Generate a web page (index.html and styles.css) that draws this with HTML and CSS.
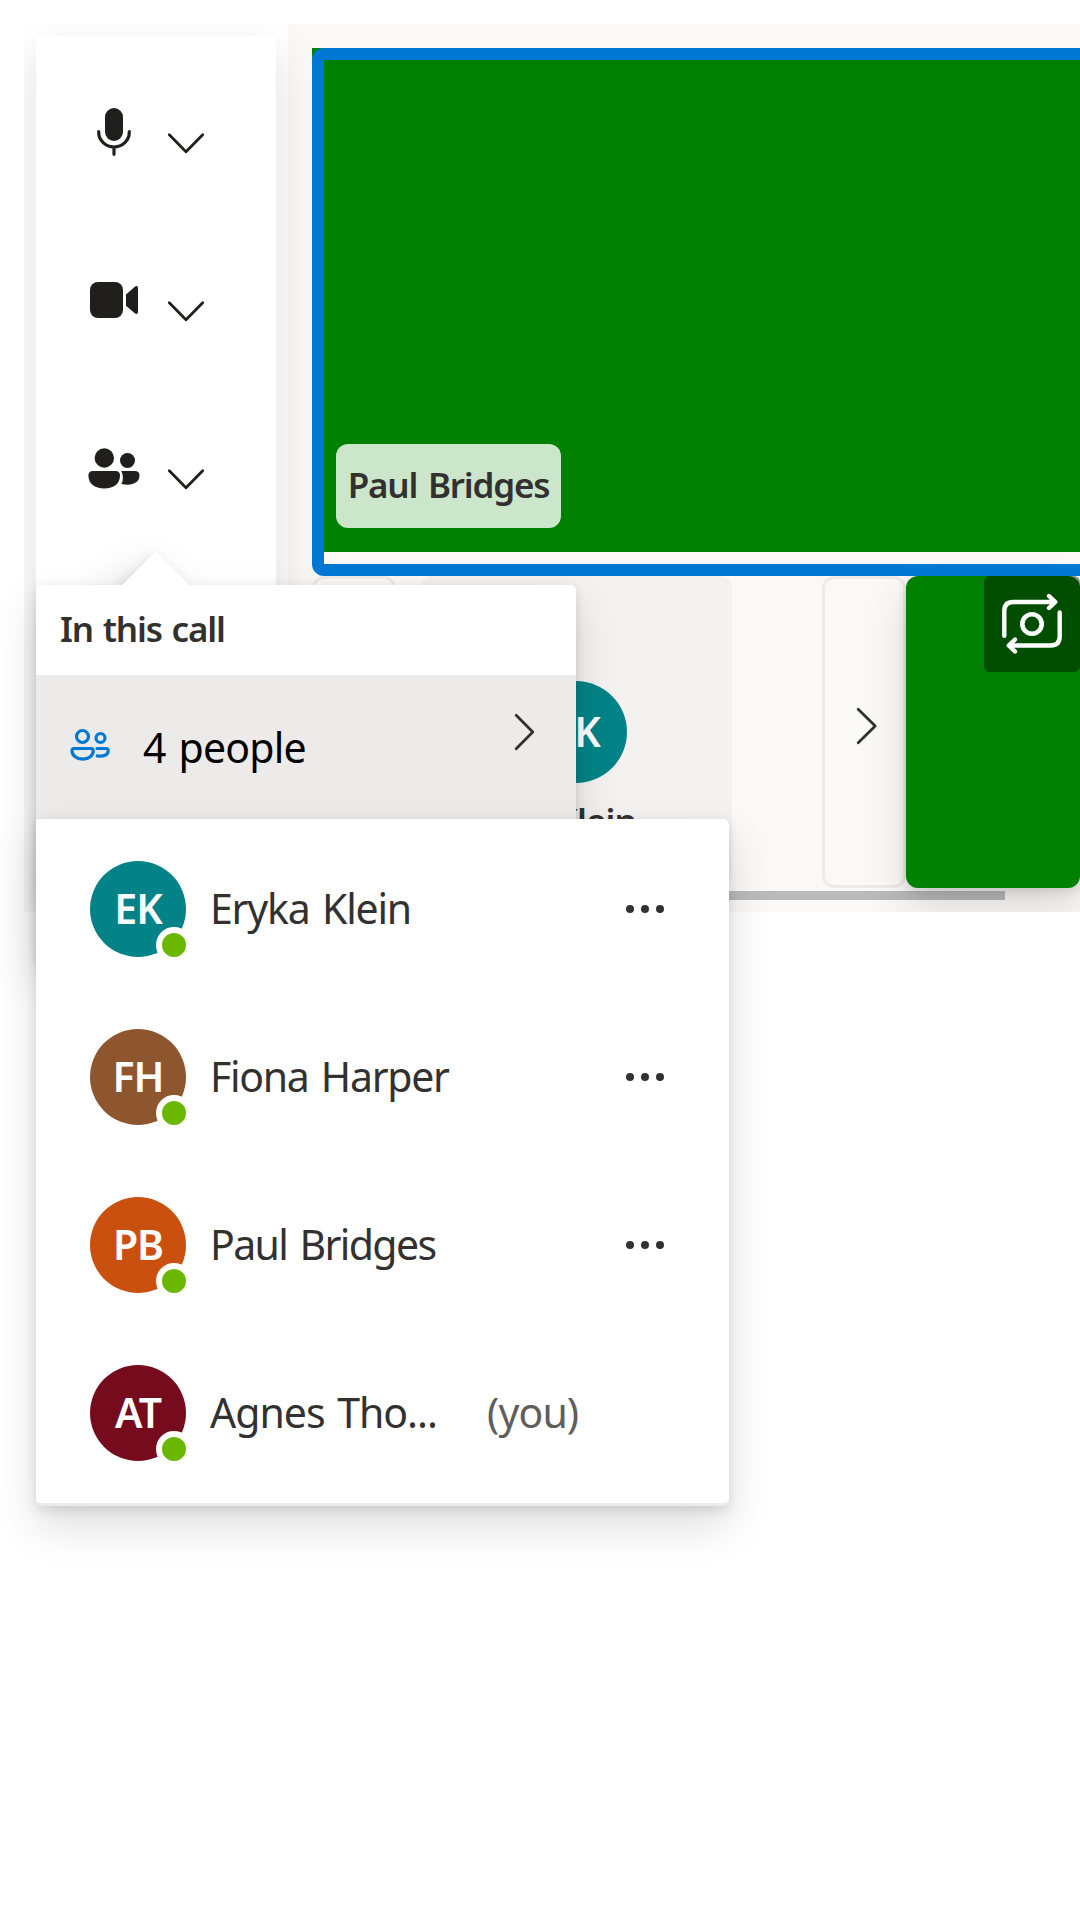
FILE: index.html
```html
<!DOCTYPE html>
<html lang="en">
<head>
<meta charset="utf-8">
<title>Call</title>
<link rel="stylesheet" href="styles.css">
</head>
<body>
<main class="app">
  <nav class="controls">
    <button class="control" aria-label="Microphone">
      <svg viewBox="36 36 240 168"><rect x="105" y="108" width="18" height="33" rx="9"/><path class="line" d="M98.7 131.5v.8a15.3 14.7 0 0 0 30.6 0v-.8M114 147v7.300" stroke-width="3.2"/><path class="line chev" d="m169.300 134.800 16.700 16.900 16.700-16.900"/></svg>
    </button>
    <button class="control" aria-label="Camera">
      <svg viewBox="36 204 240 168"><rect x="90" y="282" width="33" height="36" rx="8"/><path d="M126 294.400 134.500 287q3.500-2.300 3.500 1.200v23.600q0 3.500-3.500 1.200L126 305.800z"/><path class="line chev" d="m169.300 302.800 16.700 16.900 16.700-16.900"/></svg>
    </button>
    <button class="control" aria-label="People">
      <svg viewBox="36 372 240 168"><circle cx="104.300" cy="458" r="9.700"/><circle cx="127.500" cy="460.500" r="7.500"/><path d="M93 471h22.500q4.500 0 4.500 4.500c0 8-6 13-15.700 13S88.400 483.500 88.400 475.500Q88.400 471 93 471zM121.300 471H135q4.500 0 4.500 4.500c0 6-5 9.200-12 9.200q-3.500 0-6-.8 3-6.500-.2-12.900z"/><path class="line chev" d="m169.300 470.800 16.700 16.900 16.700-16.900"/></svg>
    </button>
  </nav>

  <section class="stage">
    <div class="speaker">
      <div class="video"><span class="name-tag">Paul Bridges</span></div>
    </div>
    <div class="strip">
      <button class="pager prev" aria-label="Previous"></button>
      <div class="person-tile">
        <div class="tile-avatar">EK</div>
        <div class="tile-name">Eryka Klein</div>
      </div>
      <button class="pager next" aria-label="Next"><svg viewBox="0 0 84 312"><path class="line chev" d="m36.200 133.300 17 16.700-17 16.700"/></svg></button>
      <div class="local-tile">
        <button class="switch-camera" aria-label="Switch camera"><svg viewBox="984 576 96 96"><path class="line" stroke-width="4.400" d="M1004.300 635.800V611q0-9 9-9h41.200m-5.500-6 6.300 6-6.300 6M1059.700 612.500v24q0 9-9 9H1009.500m5.500-6-6.300 6 6.300 6"/><circle class="line" cx="1032" cy="624" r="9.700" stroke-width="4.600"/></svg></button>
      </div>
    </div>
    <div class="scrollbar"></div>
  </section>
</main>

<div class="menu callout">
  <div class="beak"></div>
  <h2 class="menu-title">In this call</h2>
  <div class="menu-item">
    <svg class="people-icon" viewBox="66 726 48 39"><circle cx="82.500" cy="736.500" r="6"/><circle cx="100.500" cy="738" r="4.500"/><path d="M74.200 748.500h17.100q1.900 0 1.900 2.200c0 5-4.200 8.500-10.400 8.500s-10.800-3.500-10.800-8.500q0-2.200 2.200-2.200zM97 748.500h9.200q2 0 2 2.200c0 4.200-4.400 6.200-11 5.200"/></svg>
    <span class="people-count">4 people</span>
    <svg class="arrow" viewBox="512 711 24 42"><path class="line chev" d="m516.200 715.300 16.600 16.700-16.600 16.700"/></svg>
  </div>
</div>

<ul class="menu roster">
  <li class="participant"><span class="avatar teal">EK<i class="presence"></i></span><span class="name n1">Eryka Klein</span><svg class="more" viewBox="0 0 40 10"><circle cx="5" cy="5" r="4"/><circle cx="20" cy="5" r="4"/><circle cx="35" cy="5" r="4"/></svg></li>
  <li class="participant"><span class="avatar brown">FH<i class="presence"></i></span><span class="name n2">Fiona Harper</span><svg class="more" viewBox="0 0 40 10"><circle cx="5" cy="5" r="4"/><circle cx="20" cy="5" r="4"/><circle cx="35" cy="5" r="4"/></svg></li>
  <li class="participant"><span class="avatar orange">PB<i class="presence"></i></span><span class="name n3">Paul Bridges</span><svg class="more" viewBox="0 0 40 10"><circle cx="5" cy="5" r="4"/><circle cx="20" cy="5" r="4"/><circle cx="35" cy="5" r="4"/></svg></li>
  <li class="participant"><span class="avatar wine">AT<i class="presence"></i></span><span class="name n4">Agnes Tho...</span><span class="you">(you)</span></li>
</ul>
</body>
</html>
```
FILE: styles.css
```css
* { box-sizing: border-box; }
html, body { margin: 0; width: 1080px; height: 1920px; overflow: hidden; background: #fff; }
body {
  position: relative;
  padding: 24px 0 0 24px;
  font-family: "Noto Sans", "Open Sans", sans-serif;
  color: #323130;
  --shadow: 0 19.2px 43.2px rgba(0,0,0,.132), 0 3.6px 10.8px rgba(0,0,0,.108);
}
button { padding: 0; border: 0; background: none; color: inherit; font: inherit; }
svg { display: block; fill: currentColor; }
.line { fill: none; stroke: currentColor; stroke-linecap: round; stroke-linejoin: round; }
.chev { stroke-width: 2.8; }

.app { display: flex; height: 888px; overflow: hidden; background: #fff; }
.controls {
  position: relative; z-index: 1;
  flex: none; width: 240px; height: 864px; margin: 12px;
  background: #fff; color: #201f1e; box-shadow: 0 19.2px 43.2px rgba(0,0,0,.132);
}
.control { display: block; width: 240px; height: 168px; }
.stage { flex: 1; padding: 24px 0 0 24px; background: #faf9f8; }

.speaker { position: relative; height: 528px; margin-right: -40px; }
.speaker::after {
  content: ""; position: absolute; inset: 0;
  border: 12px solid #0078d4; border-radius: 12px;
}
.video { display: flex; align-items: flex-end; height: 504px; padding: 24px; background: #008000; }
.name-tag {
  width: 225px; height: 84px; line-height: 82px; border-radius: 12px;
  background: rgba(255,255,255,.8); text-align: center; white-space: nowrap;
  font-size: 35px; font-weight: 600; letter-spacing: -1.2px; word-spacing: 3px;
}
.strip { display: flex; height: 312px; }
.pager { flex: none; width: 84px; height: 312px; border: 3px solid #edebe9; border-radius: 12px; }
.pager svg { width: 84px; height: 312px; margin: -3px; }
.person-tile {
  display: flex; flex-direction: column; align-items: center;
  width: 312px; margin: 0 90px 0 24px; padding-top: 105px;
  border-radius: 12px; background: #f3f2f1;
}
.tile-avatar {
  width: 102px; height: 102px; line-height: 100px; border-radius: 50%;
  background: #038387; color: #fff; text-align: center; font-size: 41px; font-weight: 600; letter-spacing: -1px;
}
.tile-name { margin: 14px 56px 0 0; align-self: flex-end; padding-right: 40px; line-height: 48px; font-size: 35px; font-weight: 600; letter-spacing: -.9px; }
.local-tile {
  display: flex; justify-content: flex-end; width: 174px;
  border-radius: 12px; background: #008000; box-shadow: var(--shadow);
}
.switch-camera { width: 96px; height: 96px; border-radius: 6px; background: rgba(0,0,0,.4); color: #fff; }
.scrollbar { width: 693px; height: 9px; margin-top: 3px; background: rgba(0,0,0,.25); }

.menu { position: absolute; left: 36px; margin: 0; border-radius: 6px; background: #fff; box-shadow: var(--shadow); }
.callout { z-index: 2; top: 585px; width: 540px; height: 378px; }
.beak {
  position: absolute; z-index: -1; left: 96px; top: -24px; width: 48px; height: 48px;
  background: #fff; transform: rotate(45deg); box-shadow: var(--shadow);
}
.callout::before { content: ""; position: absolute; z-index: -1; inset: 0; border-radius: 6px; background: #fff; }
.menu-title {
  position: relative; margin: 0; padding-left: 24px; height: 90px; line-height: 88px; background: #fff; border-radius: 6px;
  font-size: 35px; font-weight: 600; letter-spacing: -1.2px; word-spacing: 2px;
}
.menu-item { display: flex; align-items: center; height: 144px; padding: 0 40px 0 30px; background: #edebe9; color: #000; }
.people-icon { width: 48px; height: 39px; margin-top: -3px; fill: none; stroke: #0078d4; stroke-width: 3.2; stroke-linecap: round; }
.people-count { flex: 1; margin: -1px 0 0 29px; font-size: 41px; letter-spacing: -.8px; word-spacing: 3px; }
.arrow { width: 24px; height: 42px; margin-top: -30px; color: #323130; }

.roster { z-index: 3; top: 819px; width: 693px; height: 687px; padding: 6px 0 0; list-style: none; border-bottom: 3px solid #edebe9; }
.participant { display: flex; align-items: center; height: 168px; padding: 0 64px 0 54px; }
.avatar {
  position: relative; width: 96px; height: 96px; line-height: 95px; border-radius: 50%;
  color: #fff; text-align: center; font-size: 41px; font-weight: 600; letter-spacing: -1px;
}
.teal { background: #038387; }
.brown { background: #8e562e; }
.orange { background: #ca5010; }
.wine { background: #750b1c; }
.presence { position: absolute; right: -6px; bottom: -6px; width: 36px; height: 36px; border: 6px solid #fff; border-radius: 50%; background: #6bb700; }
.name { margin: -2px 0 0 24px; font-size: 41px; white-space: nowrap; word-spacing: 3px; }
.n1 { letter-spacing: -1.2px; }
.n2 { letter-spacing: -1.3px; }
.n3 { letter-spacing: -1.6px; }
.n4 { letter-spacing: -1px; }
.more { width: 40px; height: 10px; margin-left: auto; }
.you { margin: -2px 0 0 50px; font-size: 41px; letter-spacing: -.9px; color: #605e5c; }
```
